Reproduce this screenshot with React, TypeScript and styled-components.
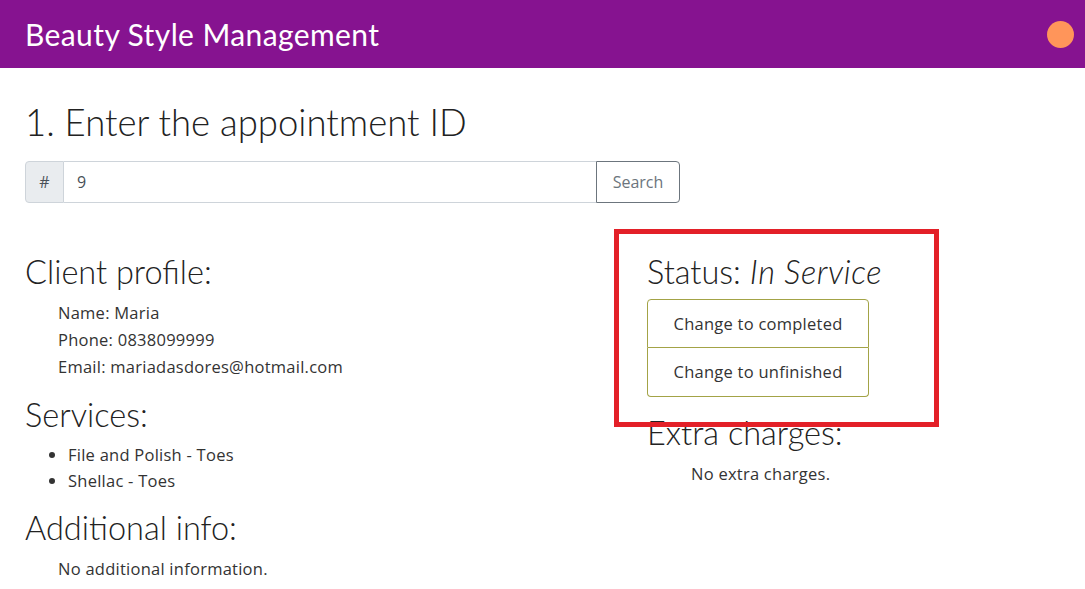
import styled, { createGlobalStyle } from 'styled-components';

const GlobalStyle = createGlobalStyle`
  body {
    margin: 0;
    background: #fff;
    font-family: 'Open Sans', Lato, sans-serif;
    color: #333;
  }
`;

const Navbar = styled.nav`
  height: 68px;
  background: #861390;
  display: flex;
  align-items: center;
  justify-content: space-between;
  padding: 0 11px 0 25px;
`;

const Brand = styled.div`
  color: #fff;
  font-family: Lato, sans-serif;
  font-size: 30px;
  letter-spacing: 0.4px;
`;

const Avatar = styled.div`
  width: 27px;
  height: 27px;
  border-radius: 50%;
  background: #ff955a;
`;

const Main = styled.main`
  position: relative;
  padding: 33px 25px 0;
`;

const Title = styled.h1`
  margin: 0 0 16px;
  font-family: Lato, sans-serif;
  font-size: 36.5px;
  font-weight: 300;
  line-height: 1.2;
  color: #222;
`;

const InputGroup = styled.div`
  display: flex;
  width: 655px;
  height: 42px;
`;

const Prefix = styled.span`
  width: 39px;
  display: flex;
  align-items: center;
  justify-content: center;
  background: #e9ecef;
  border: 1px solid #ced4da;
  border-radius: 4px 0 0 4px;
  color: #495057;
  font-size: 16px;
  box-sizing: border-box;
`;

const IdInput = styled.input`
  flex: 1;
  border: 1px solid #ced4da;
  border-left: none;
  border-right: none;
  padding: 0 13px;
  font-family: inherit;
  font-size: 16px;
  color: #495057;
  outline: none;
`;

const SearchButton = styled.button`
  width: 84px;
  border: 1px solid #6c757d;
  border-radius: 0 4px 4px 0;
  background: #fff;
  color: #6c757d;
  font-family: inherit;
  font-size: 16px;
`;

const Columns = styled.div`
  display: grid;
  grid-template-columns: 622px 1fr;
  margin-top: 50px;
`;

const Section = styled.section<{ $gap?: number }>`
  margin-top: ${(p) => p.$gap ?? 0}px;
`;

const Heading = styled.h2`
  margin: 0 0 8px;
  font-family: Lato, sans-serif;
  font-size: 32.5px;
  font-weight: 300;
  line-height: 38px;
  color: #222;

  em {
    letter-spacing: 0.6px;
  }
`;

const Line = styled.div<{ $indent?: number }>`
  padding-left: ${(p) => p.$indent ?? 33}px;
  font-size: 16.5px;
  letter-spacing: 0.25px;
  line-height: 27px;
  color: #333;
`;

const List = styled.ul`
  margin: 0;
  padding-left: 43px;
  font-size: 16.5px;
  letter-spacing: 0.25px;
  line-height: 26px;
  color: #333;
`;

const ButtonGroup = styled.div`
  display: flex;
  flex-direction: column;
  width: 222px;
  margin: 8px 0 17px;
`;

const StatusButton = styled.button<{ $last?: boolean }>`
  height: 49px;
  background: #fff;
  border: 1px solid #a3a346;
  border-top: ${(p) => (p.$last ? 'none' : '1px solid #a3a346')};
  border-radius: ${(p) => (p.$last ? '0 0 4px 4px' : '4px 4px 0 0')};
  font-family: inherit;
  font-size: 16.5px;
  letter-spacing: 0.25px;
  color: #333;
`;

const Highlight = styled.div`
  position: absolute;
  left: 614px;
  top: 161px;
  width: 325px;
  height: 198px;
  border: 5px solid #e32028;
  box-sizing: border-box;
  pointer-events: none;
`;

export default function App() {
  return (
    <>
      <GlobalStyle />
      <Navbar>
        <Brand>Beauty Style Management</Brand>
        <Avatar />
      </Navbar>
      <Main>
        <Title>1. Enter the appointment ID</Title>
        <InputGroup>
          <Prefix>#</Prefix>
          <IdInput defaultValue="9" />
          <SearchButton>Search</SearchButton>
        </InputGroup>
        <Columns>
          <div>
            <Section>
              <Heading>Client profile:</Heading>
              <Line>Name: Maria</Line>
              <Line>Phone: 0838099999</Line>
              <Line>Email: mariadasdores@hotmail.com</Line>
            </Section>
            <Section $gap={16}>
              <Heading>Services:</Heading>
              <List>
                <li>File and Polish - Toes</li>
                <li>Shellac - Toes</li>
              </List>
            </Section>
            <Section $gap={15}>
              <Heading>Additional info:</Heading>
              <Line>No additional information.</Line>
            </Section>
          </div>
          <div>
            <Heading>
              Status: <em>In Service</em>
            </Heading>
            <ButtonGroup>
              <StatusButton>Change to completed</StatusButton>
              <StatusButton $last>Change to unfinished</StatusButton>
            </ButtonGroup>
            <Heading>Extra charges:</Heading>
            <Line $indent={44}>No extra charges.</Line>
          </div>
        </Columns>
        <Highlight />
      </Main>
    </>
  );
}
